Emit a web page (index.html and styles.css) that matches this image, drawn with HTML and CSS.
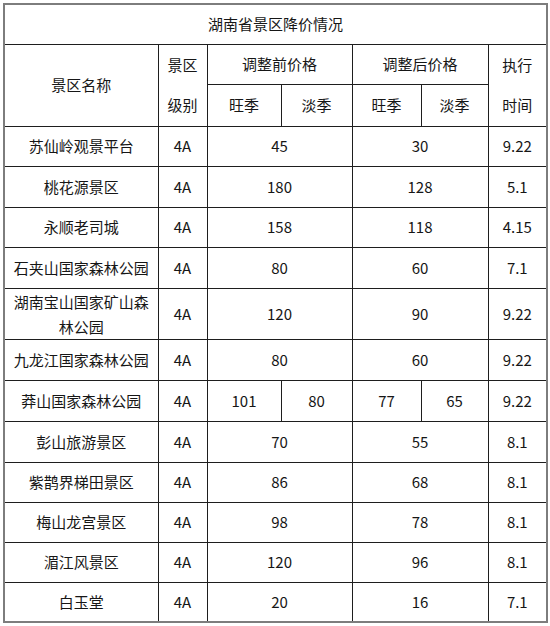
FILE: index.html
```html
<!DOCTYPE html>
<html lang="zh-CN">
<head>
<meta charset="utf-8">
<title>湖南省景区降价情况</title>
<link rel="stylesheet" href="styles.css">
</head>
<body>
<table class="price-table">
  <colgroup>
    <col class="c-name">
    <col class="c-level">
    <col class="c-p1">
    <col class="c-p2">
    <col class="c-p3">
    <col class="c-p4">
    <col class="c-time">
  </colgroup>
  <tr class="r-title"><td colspan="7">湖南省景区降价情况</td></tr>
  <tr class="r-h1">
    <td rowspan="2">景区名称</td>
    <td rowspan="2"><span class="two">景区<br>级别</span></td>
    <td colspan="2">调整前价格</td>
    <td colspan="2">调整后价格</td>
    <td rowspan="2"><span class="two">执行<br>时间</span></td>
  </tr>
  <tr class="r-h2">
    <td>旺季</td><td>淡季</td><td>旺季</td><td>淡季</td>
  </tr>
  <tr class="r40"><td>苏仙岭观景平台</td><td>4A</td><td colspan="2">45</td><td colspan="2">30</td><td>9.22</td></tr>
  <tr class="r41"><td>桃花源景区</td><td>4A</td><td colspan="2">180</td><td colspan="2">128</td><td>5.1</td></tr>
  <tr class="r40"><td>永顺老司城</td><td>4A</td><td colspan="2">158</td><td colspan="2">118</td><td>4.15</td></tr>
  <tr class="r41"><td>石夹山国家森林公园</td><td>4A</td><td colspan="2">80</td><td colspan="2">60</td><td>7.1</td></tr>
  <tr class="r51"><td class="wrap">湖南宝山国家矿山森林公园</td><td>4A</td><td colspan="2">120</td><td colspan="2">90</td><td>9.22</td></tr>
  <tr class="r41"><td>九龙江国家森林公园</td><td>4A</td><td colspan="2">80</td><td colspan="2">60</td><td>9.22</td></tr>
  <tr class="r41"><td>莽山国家森林公园</td><td>4A</td><td>101</td><td>80</td><td>77</td><td>65</td><td>9.22</td></tr>
  <tr class="r41"><td>彭山旅游景区</td><td>4A</td><td colspan="2">70</td><td colspan="2">55</td><td>8.1</td></tr>
  <tr class="r40"><td>紫鹊界梯田景区</td><td>4A</td><td colspan="2">86</td><td colspan="2">68</td><td>8.1</td></tr>
  <tr class="r40"><td>梅山龙宫景区</td><td>4A</td><td colspan="2">98</td><td colspan="2">78</td><td>8.1</td></tr>
  <tr class="r40"><td>湄江风景区</td><td>4A</td><td colspan="2">120</td><td colspan="2">96</td><td>8.1</td></tr>
  <tr class="r40"><td>白玉堂</td><td>4A</td><td colspan="2">20</td><td colspan="2">16</td><td>7.1</td></tr>
</table>
</body>
</html>
```
FILE: styles.css
```css
html, body {
  margin: 0;
  padding: 0;
  background: #ffffff;
}
body {
  font-family: "Noto Sans CJK SC", "Noto Sans", sans-serif;
  font-size: 15px;
  color: #161616;
}
.price-table {
  margin: 3px 0 0 3px;
  width: 545px;
  table-layout: fixed;
  border-collapse: collapse;
  border: 2px solid #7d7d7d;
}
.c-name { width: 154px; }
.c-level { width: 49px; }
.c-p1 { width: 74px; }
.c-p2 { width: 71px; }
.c-p3 { width: 69px; }
.c-p4 { width: 67px; }
.c-time { width: 59px; }
.price-table td {
  box-sizing: border-box;
  border: 1px solid #1e1e1e;
  text-align: center;
  vertical-align: middle;
  padding: 0 4px;
  line-height: 20px;
  white-space: nowrap;
}
.price-table td.wrap {
  white-space: normal;
  line-height: 25px;
  padding: 0 6px;
}
.two {
  display: block;
  line-height: 40px;
}
.r-title td { height: 40px; }
.r-h1 td { height: 40px; }
.r-h2 td { height: 42px; }
.r40 td { height: 40px; }
.r41 td { height: 41px; }
.r51 td { height: 51px; }
```
